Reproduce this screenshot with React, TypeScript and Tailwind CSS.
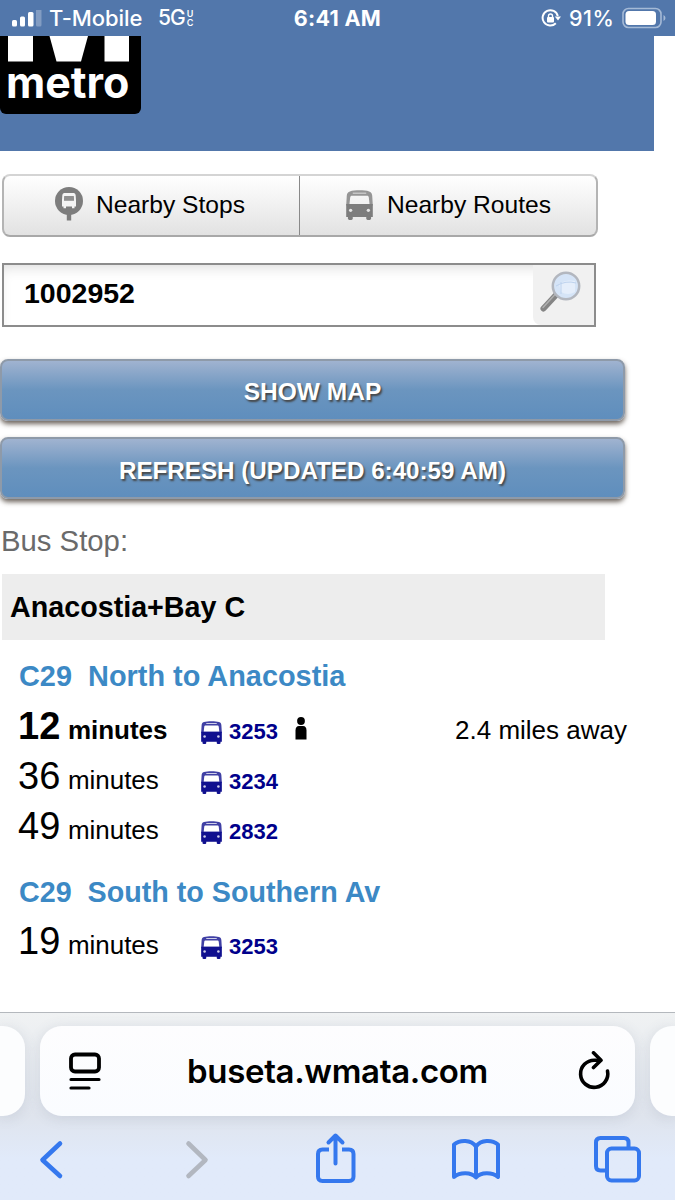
import React from 'react';

interface Arrival {
  minutes: number;
  bus: string;
  next?: boolean;
  crowding?: boolean;
  distance?: string;
}

const NORTH: Arrival[] = [
  { minutes: 12, bus: '3253', next: true, crowding: true, distance: '2.4 miles away' },
  { minutes: 36, bus: '3234' },
  { minutes: 49, bus: '2832' },
];

const SOUTH: Arrival[] = [{ minutes: 19, bus: '3253' }];

function BusIcon({ className }: { className: string }) {
  return (
    <svg viewBox="0 0 28 31" preserveAspectRatio="none" className={className} fill="currentColor">
      <path
        opacity="0.8"
        fillRule="evenodd"
        d="M4 1.500C9 0 19 0 24 1.500C26.500 2.300 27 4 27.200 6L27.800 16H0.200L0.800 6C1 4 1.500 2.300 4 1.500ZM6.500 6C5 6 4.500 6.500 4.300 8L3.600 14.500H24.400L23.700 8C23.500 6.500 23 6 21.500 6ZM7 2.800V3.600H21V2.800Z"
      />
      <path d="M0.200 14.500H27.800V28H0.200Z" />
      <circle cx="4.800" cy="21" r="1.700" fill="white" opacity="0.8" />
      <circle cx="23.200" cy="21" r="1.700" fill="white" opacity="0.8" />
      <rect x="2" y="26" width="5" height="5" rx="1.500" />
      <rect x="21" y="26" width="5" height="5" rx="1.500" />
    </svg>
  );
}

function StopIcon() {
  return (
    <svg viewBox="0 0 30 36" className="-mt-1 h-9 w-[30px]">
      <circle cx="15" cy="15" r="14" fill="#7d7d7d" />
      <path d="M12.800 28H17.200V34.500H12.800Z" fill="#7d7d7d" />
      <path
        fillRule="evenodd"
        d="M10.500 7H19.500C21 7 21.500 8 21.700 9.500L22 14V20.500H20.500V22.300H18V20.500H12V22.300H9.500V20.500H8V14L8.300 9.500C8.500 8 9 7 10.500 7ZM10.500 10L10 14.500H20L19.500 10Z"
        fill="#f4f4f4"
      />
      <path d="M10.500 10H19.500L20 14.500H10Z" fill="#909090" />
    </svg>
  );
}

function StatusBar() {
  return (
    <div className="grid h-9 grid-cols-[1fr_100px_1fr] items-center bg-[#5277ab] font-['Inter',sans-serif] text-white">
      <div className="flex items-center pl-3">
        <svg viewBox="0 0 30 17" className="h-[17px] w-[30px]" fill="white">
          <rect x="0" y="10" width="5" height="6.500" rx="1.500" />
          <rect x="8" y="6.500" width="5" height="10" rx="1.500" />
          <rect x="16" y="2" width="5.500" height="14.500" rx="1.500" />
          <rect x="24" y="-1" width="5.500" height="17.500" rx="1.500" opacity="0.28" />
        </svg>
        <span className="ml-[7px] w-[109px] text-[22px] font-medium tracking-[-0.1px] whitespace-nowrap">T-Mobile</span>
        <span className="text-[21px] font-medium tracking-[-1px]">5G</span>
        <span className="ml-0.5 flex flex-col text-[9px] leading-[9px] font-semibold">
          <span>U</span>
          <span>C</span>
        </span>
      </div>
      <span className="text-center text-[21.500px] font-bold tracking-[0.3px] whitespace-nowrap">6:41 AM</span>
      <div className="flex items-center justify-end pr-[9px]">
        <svg viewBox="0 0 20 20" className="h-5 w-5" fill="none" stroke="white" strokeWidth="2">
          <path d="M14.800 15.300A7.700 7.700 0 1 1 16.800 8" />
          <path d="M13.800 8.500L20 8.500L17 12.500Z" fill="white" stroke="none" />
          <rect x="6" y="9" width="7" height="5.500" rx="1" fill="white" stroke="none" />
          <path d="M7.500 9.500V8A2 2 0 0 1 11.500 8V9.500" strokeWidth="1.400" />
        </svg>
        <span className="ml-2 w-[53px] text-[21.500px] font-medium tracking-[0.5px] whitespace-nowrap">91%</span>
        <svg viewBox="0 0 44 22" className="h-[22px] w-11" fill="none">
          <rect x="1" y="1.500" width="38" height="19" rx="5.500" stroke="#a5bad6" strokeWidth="1.600" />
          <rect x="3.500" y="4" width="30.500" height="14" rx="3.500" fill="white" />
          <path d="M41.500 8V14Q43.500 13 43.500 11T41.500 8Z" fill="#a5bad6" />
        </svg>
      </div>
    </div>
  );
}

function MetroLogo() {
  return (
    <div className="h-[78px] w-[141px] overflow-hidden rounded-b-md bg-black text-white">
      <svg viewBox="0 0 141 26" className="block h-[26px] w-[141px]" fill="white">
        <rect x="8" y="0" width="25" height="25.500" />
        <path d="M49.500 0H88L81 25.500H56.500Z" />
        <rect x="104.500" y="0" width="24.500" height="25.500" />
      </svg>
      <span className="block pl-1.5 font-['Inter',sans-serif] text-[43px] leading-[41px] font-bold">metro</span>
    </div>
  );
}

function BlueButton({ children }: { children: React.ReactNode }) {
  return (
    <button className="block h-[62px] w-[625px] rounded-lg border-2 border-[#8e9aa9] bg-linear-to-b from-[#a0b3d0] via-[#6b95bf] via-50% to-[#5f8ebd] pt-1 text-[24.500px] font-bold text-white shadow-[0_3px_5px_rgba(60,50,40,0.75)] [text-shadow:1.500px_2px_2px_#444]">
      {children}
    </button>
  );
}

function ArrivalRow({ arrival }: { arrival: Arrival }) {
  return (
    <div className={`flex h-[50px] items-baseline ${arrival.next ? 'font-bold' : ''}`}>
      <span className="w-[50px] text-[38px] leading-[50px]">{arrival.minutes}</span>
      <span className="w-[133px] text-[26px] tracking-[-0.05px]">minutes</span>
      <BusIcon className="mt-5 h-[23px] w-[21px] self-start text-[#10108f]" />
      <span className="ml-[7px] w-[66px] text-[22px] font-bold text-[#00008b]">{arrival.bus}</span>
      {arrival.crowding && (
        <svg viewBox="0 0 12 23" className="mt-4 h-[23px] w-3 self-start">
          <circle cx="6" cy="4" r="3.900" />
          <path d="M0.500 22.500V13.500Q0.500 9 4 9H8Q11.500 9 11.500 13.500V22.500Z" />
        </svg>
      )}
      {arrival.distance && (
        <span className="ml-auto text-[26px] font-normal whitespace-nowrap">{arrival.distance}</span>
      )}
    </div>
  );
}

function BrowserBar() {
  return (
    <footer className="h-[188px] overflow-hidden border-t border-[#b4b8bd] bg-linear-to-b from-[#f0f2f3] via-[#dfe4ed] via-55% to-[#e1eafa] to-78%">
      <div className="mt-[13px] flex justify-between">
        <div className="h-[90px] w-[25px] rounded-r-[22px] bg-[#fcfdfe] shadow-[0_2px_14px_rgba(80,90,120,0.14)]" />
        <div className="flex h-[90px] w-[595px] items-center rounded-[22px] bg-linear-to-b from-[#fdfdfe] to-[#fafcff] pr-6 pl-7 shadow-[0_2px_14px_rgba(80,90,120,0.14)]">
          <svg viewBox="0 0 34 40" className="h-10 w-[34px]" fill="none" stroke="black" strokeWidth="3.800">
            <rect x="3" y="3.500" width="28" height="17" rx="4" />
            <path d="M3 28.500H31M3 37H21" strokeWidth="3.200" strokeLinecap="round" />
          </svg>
          <span className="flex-1 pt-0.5 pr-1 text-center font-['Inter',sans-serif] text-[33px] font-semibold tracking-[-0.350px]">buseta.wmata.com</span>
          <svg viewBox="0 0 34 40" className="h-10 w-[34px]" fill="none" stroke="black" strokeWidth="3.600" strokeLinecap="round" strokeLinejoin="round">
            <path d="M23 9.200H17.500A13.600 13.600 0 1 0 30.500 20" />
            <path d="M16.500 1.800L24 9.200L16.500 16.500" />
          </svg>
        </div>
        <div className="h-[90px] w-[25px] rounded-l-[22px] bg-[#fcfdfe] shadow-[0_2px_14px_rgba(80,90,120,0.14)]" />
      </div>
      <nav className="mt-[13px] flex items-center text-[#3578ee]">
        <svg viewBox="0 0 27 60" className="ml-[38px] h-[60px] w-[27px]" fill="none" stroke="currentColor" strokeWidth="4.600" strokeLinecap="round" strokeLinejoin="round">
          <path d="M22 14.500L4.500 31L22 47" />
        </svg>
        <svg viewBox="0 0 27 60" className="ml-[118px] h-[60px] w-[27px] text-[#b2b7c0]" fill="none" stroke="currentColor" strokeWidth="4.600" strokeLinecap="round" strokeLinejoin="round">
          <path d="M5.500 14.500L22.500 31L5.500 47" />
        </svg>
        <svg viewBox="0 0 42 60" className="ml-[104px] h-[60px] w-[42px]" fill="none" stroke="currentColor" strokeWidth="4">
          <path d="M15 20.500H8.500Q4 20.500 4 25V47.500Q4 52 8.500 52H35Q39.500 52 39.500 47.500V25Q39.500 20.500 35 20.500H28" />
          <path d="M21.500 34.500V7M14.500 13.500L21.500 6.500L28.500 13.500" strokeLinecap="round" strokeLinejoin="round" />
        </svg>
        <svg viewBox="0 0 50 60" className="ml-[95px] h-[60px] w-[50px]" fill="none" stroke="currentColor" strokeWidth="4" strokeLinecap="round" strokeLinejoin="round">
          <path d="M25 17.500C20 10.500 9 10.500 3 15.500V48C9 43 20 43 25 48.500C30 43 41 43 47 48V15.500C41 10.500 30 10.500 25 17.500V48" />
        </svg>
        <svg viewBox="0 0 48 60" className="ml-[92px] h-[60px] w-12" fill="none" stroke="currentColor" strokeWidth="4">
          <path d="M13 41.500H7.500Q3 41.500 3 37V13.500Q3 9 7.500 9H31Q35.500 9 35.500 13.500V19" />
          <rect x="14" y="19.500" width="32" height="32" rx="4.500" />
        </svg>
      </nav>
    </footer>
  );
}

export default function App() {
  return (
    <div className="flex h-[1200px] w-[675px] flex-col overflow-hidden bg-white font-['Liberation_Sans',Arial,sans-serif] text-black">
      <StatusBar />
      <main className="flex-1">
        <header className="h-[115px] w-[654px] bg-[#5277ab]">
          <MetroLogo />
        </header>

        {/* Nearby lookups */}
        <div className="mt-[23px] ml-0.5 flex h-[63px] w-[596px] overflow-hidden rounded-lg border-2 border-t-[#d4d4d4] border-r-[#b4b4b4] border-b-[#a8a8a8] border-l-[#b4b4b4] bg-linear-to-b from-white to-[#e2e2e2] text-[24.600px] [text-shadow:0_1px_1px_#fff]">
          <button className="flex w-[296px] items-center border-r border-[#898989] pl-[50px]">
            <StopIcon />
            <span className="ml-3">Nearby Stops</span>
          </button>
          <button className="flex flex-1 items-center pl-[46px] text-[#7d7d7d]">
            <BusIcon className="-mt-0.5 h-[30px] w-[27px]" />
            <span className="ml-3.5 text-black">Nearby Routes</span>
          </button>
        </div>

        {/* Stop search */}
        <div className="mt-[26px] ml-0.5 flex h-16 w-[594px] items-center border-2 border-[#8c8c8c] bg-white pl-[20px] shadow-[inset_0_8px_14px_-6px_rgba(0,0,0,0.15)]">
          <span className="-mt-1 flex-1 text-[28.500px] font-bold">1002952</span>
          <button className="flex h-[60px] w-[61px] items-center justify-center rounded-bl-lg bg-[#f1f1f1]">
            <svg viewBox="0 0 42 42" className="-mt-1.5 -ml-2 h-[42px] w-[42px]">
              <path d="M4.500 37.500L17 24" stroke="#858585" strokeWidth="6" strokeLinecap="round" />
              <path d="M4 36.500L16 23.500" stroke="#b0b0b0" strokeWidth="1.500" strokeLinecap="round" />
              <circle cx="27" cy="15" r="13.200" fill="#d5e4f7" stroke="#b3b7bf" strokeWidth="2.500" />
              <path d="M20 13Q27 8 36 10V21Q29 25 22 21Z" fill="#e5eefb" />
              <path d="M17 15Q27 9 37 12M22 11V23" stroke="#bdd2ee" strokeWidth="1" fill="none" />
            </svg>
          </button>
        </div>

        <div className="mt-8 flex flex-col gap-4">
          <BlueButton>SHOW MAP</BlueButton>
          <BlueButton>
            <span className="relative top-px text-[24.200px]">REFRESH (UPDATED 6:40:59 AM)</span>
          </BlueButton>
        </div>

        <p className="mt-[15px] ml-px h-[60px] text-[29.300px] leading-[53px] text-[#6a6a6a]">Bus Stop:</p>
        <h1 className="ml-0.5 h-[66px] w-[603px] bg-[#ededed] pl-2 text-[28.700px] leading-[66px] font-bold">Anacostia+Bay C</h1>

        {/* Predictions */}
        <section className="w-[627px] pt-[11px] pl-[18px]">
          <h2 className="pl-px text-[28.900px] leading-[50px] font-bold whitespace-pre text-[#3c89c5]">{'C29  North to Anacostia'}</h2>
          {NORTH.map((a) => (
            <ArrivalRow key={a.minutes} arrival={a} />
          ))}
        </section>
        <section className="w-[627px] pt-[17px] pl-[18px]">
          <h2 className="pl-px text-[28.700px] leading-[48px] font-bold whitespace-pre text-[#3c89c5]">{'C29  South to Southern Av'}</h2>
          {SOUTH.map((a) => (
            <ArrivalRow key={a.minutes} arrival={a} />
          ))}
        </section>
      </main>
      <BrowserBar />
    </div>
  );
}
